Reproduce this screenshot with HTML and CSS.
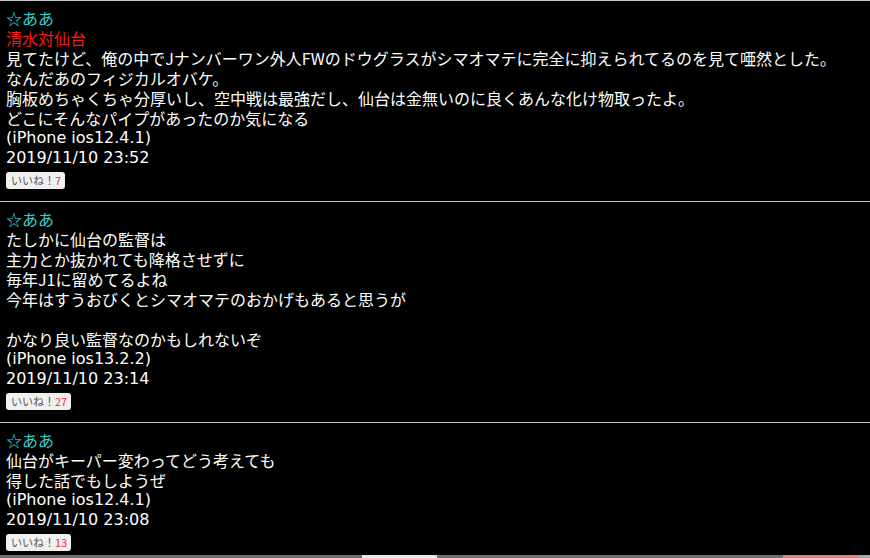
FILE: index.html
```html
<!DOCTYPE html>
<html lang="ja">
<head>
<meta charset="utf-8">
<link rel="stylesheet" href="styles.css">
</head>
<body>
<div class="thread">
  <div class="post">
    <div class="name">☆ああ</div>
    <div class="title">清水対仙台</div>
    <div class="body">見てたけど、俺の中でJナンバーワン外人FWのドウグラスがシマオマテに完全に抑えられてるのを見て唖然とした。<br>なんだあのフィジカルオバケ。<br>胸板めちゃくちゃ分厚いし、空中戦は最強だし、仙台は金無いのに良くあんな化け物取ったよ。<br>どこにそんなパイプがあったのか気になる</div>
    <div class="meta">(iPhone ios12.4.1)</div>
    <div class="meta">2019/11/10 23:52</div>
    <div class="likes"><span class="like">いいね！<span class="count">7</span></span></div>
  </div>
  <div class="post">
    <div class="name">☆ああ</div>
    <div class="body">たしかに仙台の監督は<br>主力とか抜かれても降格させずに<br>毎年J1に留めてるよね<br>今年はすうおびくとシマオマテのおかげもあると思うが<br><br>かなり良い監督なのかもしれないぞ</div>
    <div class="meta">(iPhone ios13.2.2)</div>
    <div class="meta">2019/11/10 23:14</div>
    <div class="likes"><span class="like">いいね！<span class="count">27</span></span></div>
  </div>
  <div class="post">
    <div class="name">☆ああ</div>
    <div class="body">仙台がキーパー変わってどう考えても<br>得した話でもしようぜ</div>
    <div class="meta">(iPhone ios12.4.1)</div>
    <div class="meta">2019/11/10 23:08</div>
    <div class="likes"><span class="like">いいね！<span class="count">13</span></span></div>
  </div>
</div>
<div class="footer-bar">
  <span class="seg seg-gray1"></span><span class="seg seg-white"></span><span class="seg seg-gray2"></span><span class="seg seg-red"></span><span class="seg seg-gray3"></span>
</div>
</body>
</html>
```
FILE: styles.css
```css
html, body {
  margin: 0;
  padding: 0;
  background: #000;
}
body {
  font-family: "Noto Sans CJK JP", "Liberation Sans", sans-serif;
  font-size: 16px;
  line-height: 20px;
  color: #fff;
  overflow: hidden;
  height: 558px;
}
.thread {
  border-top: 1px solid #c8c8c8;
}
.post {
  padding: 7px 6px 12px 6px;
  border-bottom: 1px solid #c8c8c8;
}
.name {
  color: #33d0d0;
}
.title {
  color: #f01818;
}
.meta {
  font-family: "DejaVu Sans", "Noto Sans CJK JP", sans-serif;
  font-size: 16px;
}
.likes {
  margin-top: 4px;
  height: 17px;
}
.like {
  display: inline-block;
  background: #f0f0f0;
  color: #5a5a5a;
  font-size: 11px;
  line-height: 17px;
  height: 17px;
  padding: 0 4px 0 5px;
  border-radius: 3px;
  vertical-align: top;
}
.count {
  color: #e33;
}
.footer-bar {
  position: fixed;
  left: 0;
  right: 0;
  bottom: 0;
  display: flex;
  height: 3px;
}
.seg { display: block; height: 3px; }
.seg-gray1 { width: 362px; background: #6e6e6e; }
.seg-white { width: 75px; background: #e8e8e8; }
.seg-gray2 { width: 346px; background: #6e6e6e; }
.seg-red { width: 76px; background: #e08080; }
.seg-gray3 { flex: 1; background: #aaa; }
```
